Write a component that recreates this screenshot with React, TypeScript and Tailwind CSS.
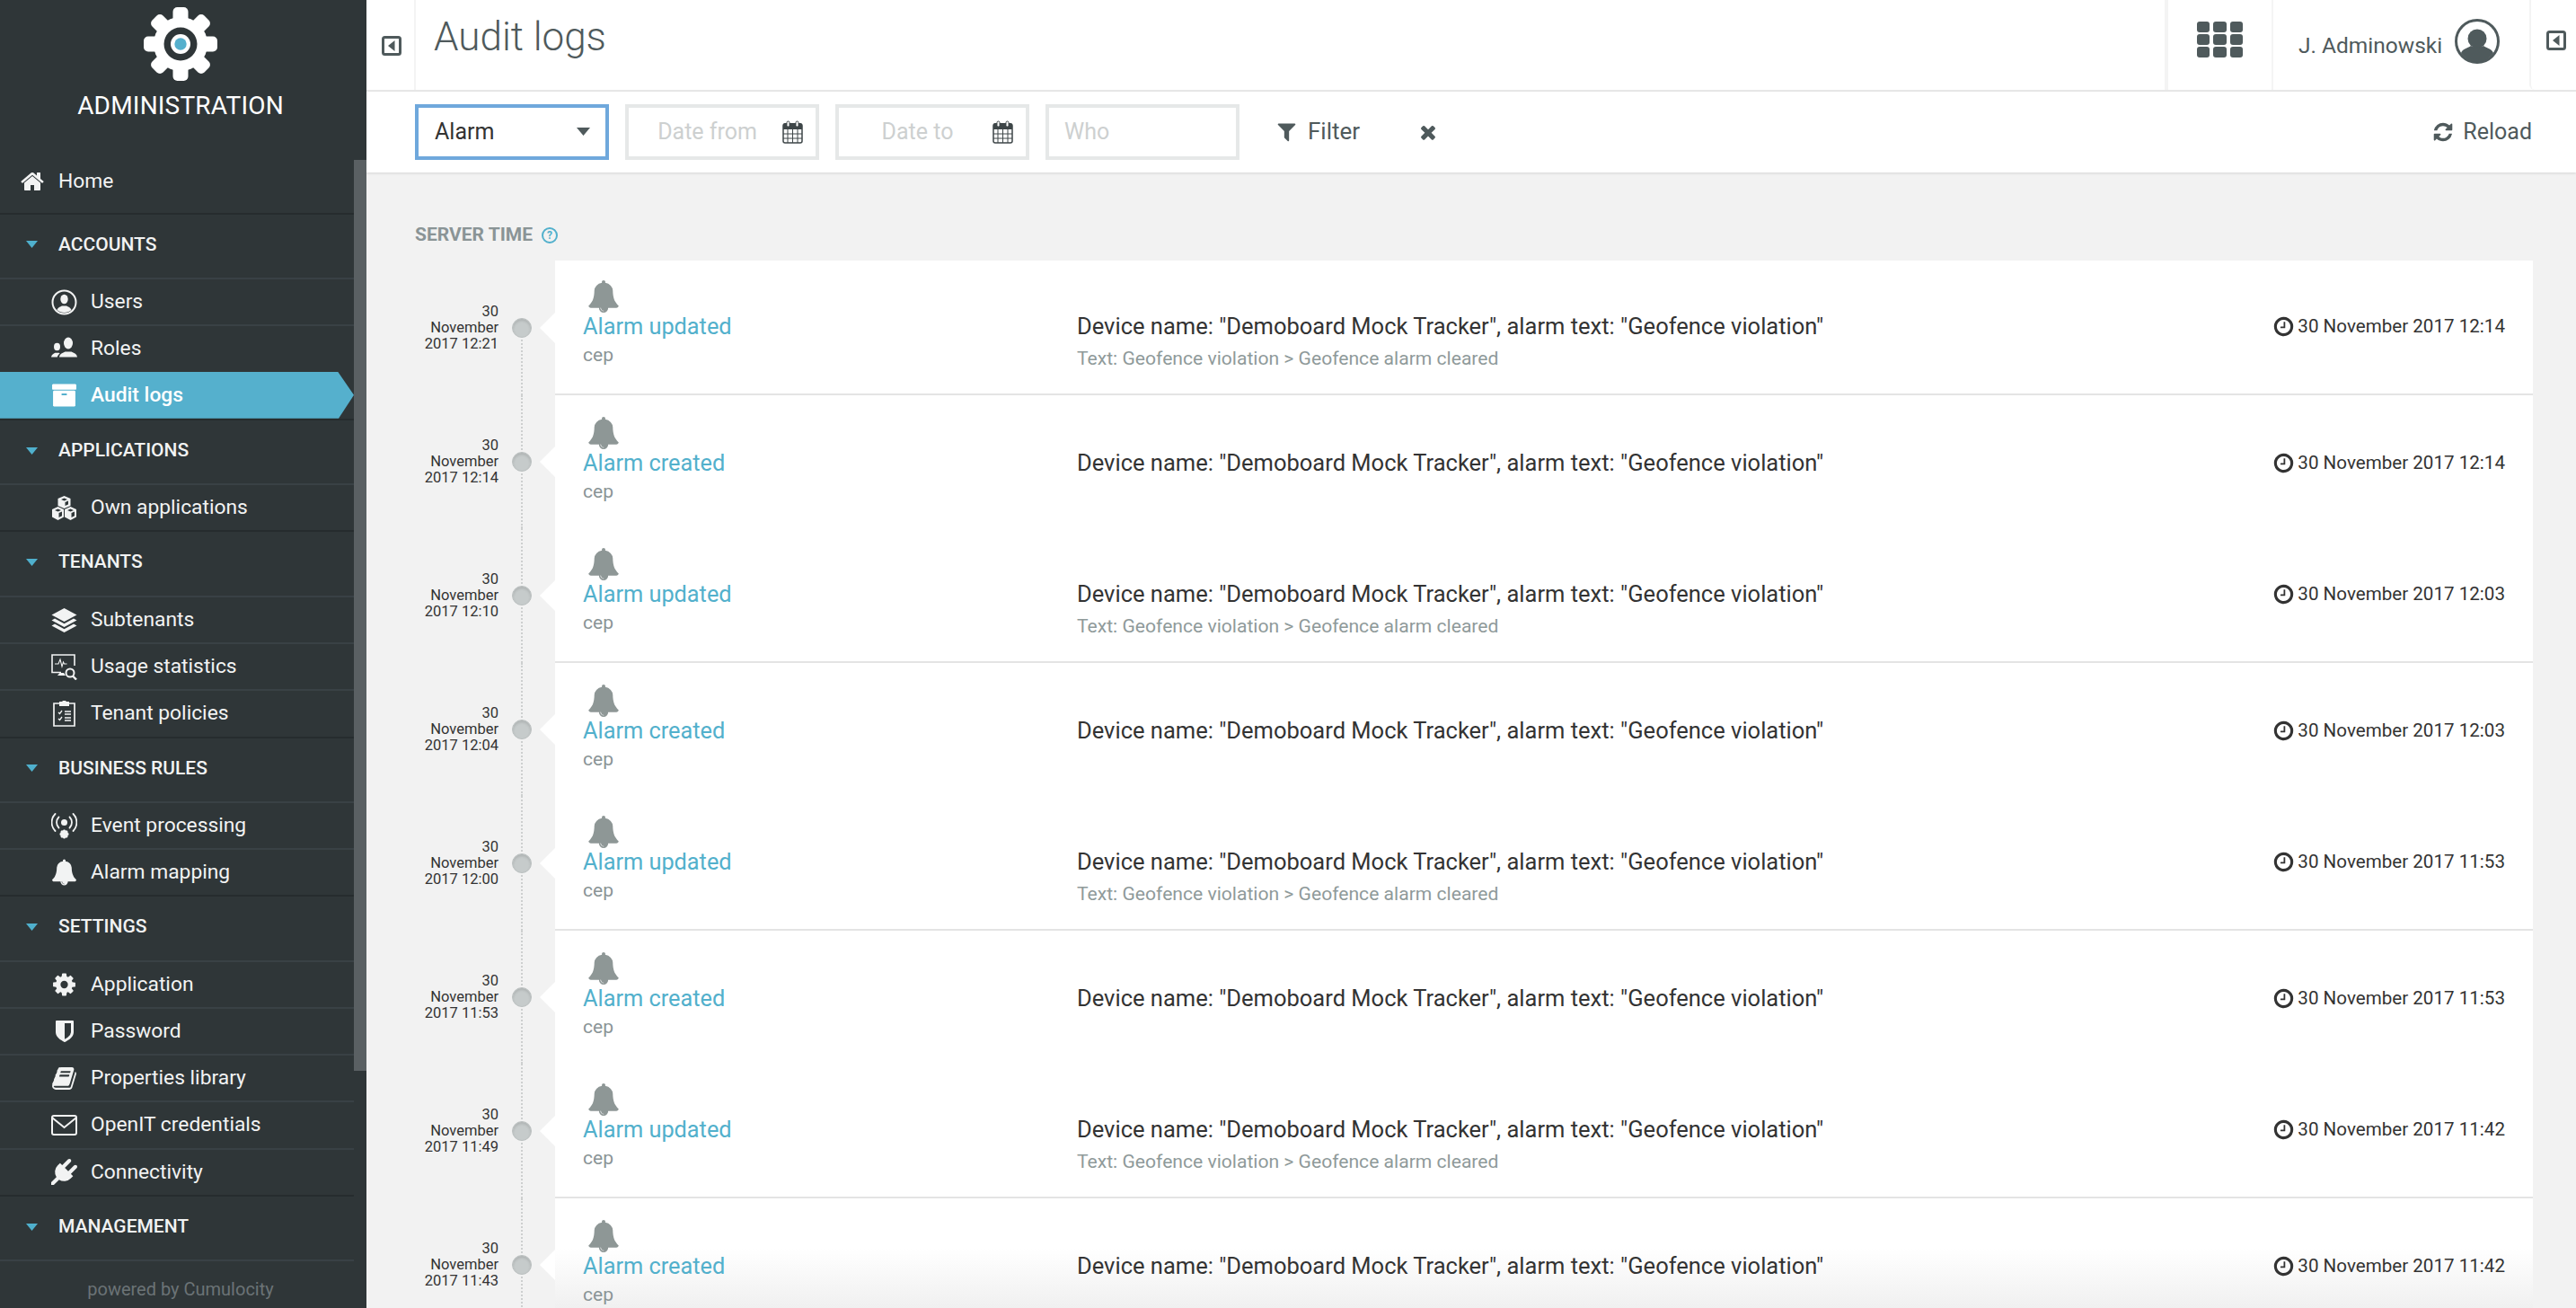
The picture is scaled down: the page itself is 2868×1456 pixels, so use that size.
import type { ReactNode } from "react";

const P = {
  home: "M1472 992v480q0 26-19 45t-45 19h-384v-384h-256v384h-384q-26 0-45-19t-19-45v-480q0-1 .5-3t.5-3l575-474 575 474q1 2 1 6zm223-69l-62 74q-8 9-21 11h-3q-13 0-21-7l-692-577-692 577q-12 8-24 7-13-2-21-11l-62-74q-8-10-7-23.500t11-21.500l719-599q32-26 76-26t76 26l244 204v-195q0-14 9-23t23-9h192q14 0 23 9t9 23v408l219 182q10 8 11 21.500t-7 23.500z",
  bell: "M912 1696q0-16-16-16-59 0-101.500-42.500t-42.500-101.500q0-16-16-16t-16 16q0 73 51.500 124.500t124.500 51.500q16 0 16-16zm816-288q0 52-38 90t-90 38h-448q0 106-75 181t-181 75-181-75-75-181h-448q-52 0-90-38t-38-90q50-42 91-88t85-119.500 74.500-158.500 50-206 19.500-260q0-152 117-282.500t307-158.500q-8-19-8-39 0-40 28-68t68-28 68 28 28 68q0 20-8 39 190 28 307 158.500t117 282.500q0 139 19.500 260t50 206 74.500 158.500 85 119.500 91 88z",
  cog: "M1152 896q0-106-75-181t-181-75-181 75-75 181 75 181 181 75 181-75 75-181zm512-109v222q0 12-8 23t-20 13l-185 28q-19 54-39 91 35 50 107 138 10 12 10 25t-9 23q-27 37-99 108t-94 71q-12 0-26-9l-138-108q-44 23-91 38-16 136-29 186-7 28-36 28h-222q-14 0-24.500-8.500t-11.500-21.500l-28-184q-49-16-90-37l-141 107q-10 9-25 9-14 0-25-11-126-114-165-168-7-10-7-23 0-12 8-23 15-21 51-66.500t54-70.500q-27-50-41-99l-183-27q-13-2-21-12.500t-8-23.500v-222q0-12 8-23t19-13l186-28q14-46 39-92-40-57-107-138-10-12-10-24 0-10 9-23 26-36 98.500-107.500t94.500-71.500q13 0 26 10l138 107q44-23 91-38 16-136 29-186 7-28 36-28h222q14 0 24.500 8.500t11.500 21.500l28 184q49 16 90 37l142-107q9-9 24-9 13 0 25 10 129 119 165 170 7 8 7 22 0 12-8 23-15 21-51 66.500t-54 70.500q26 50 41 98l183 28q13 2 21 12.500t8 23.500z",
  filter: "M1595 295q17 41-14 70l-493 493v742q0 42-39 59-13 5-25 5-27 0-45-19l-256-256q-19-19-19-45v-486l-493-493q-31-29-14-70 17-39 59-39h1280q42 0 59 39z",
  times: "M1490 1322q0 40-28 68l-136 136q-28 28-68 28t-68-28l-294-294-294 294q-28 28-68 28t-68-28l-136-136q-28-28-28-68t28-68l294-294-294-294q-28-28-28-68t28-68l136-136q28-28 68-28t68 28l294 294 294-294q28-28 68-28t68 28l136 136q28 28 28 68t-28 68l-294 294 294 294q28 28 28 68z",
  refresh: "M1639 1056q0 5-1 7-64 268-268 434.500t-478 166.500q-146 0-282.500-55t-243.500-157l-129 129q-19 19-45 19t-45-19-19-45v-448q0-26 19-45t45-19h448q26 0 45 19t19 45-19 45l-137 137q71 66 161 102t187 36q134 0 250-65t186-179q11-17 53-117 8-23 30-23h192q13 0 22.500 9.500t9.500 22.500zm25-800v448q0 26-19 45t-45 19h-448q-26 0-45-19t-19-45 19-45l138-138q-148-137-349-137-134 0-250 65t-186 179q-11 17-53 117-8 23-30 23h-199q-13 0-22.500-9.500t-9.500-22.500v-7q65-268 270-434.500t480-166.500q146 0 284 55.500t245 156.500l130-129q19-19 45-19t45 19 19 45z",
  archive: "M1088 832q0-26-19-45t-45-19h-256q-26 0-45 19t-19 45 19 45 45 19h256q26 0 45-19t19-45zm576-192v960q0 26-19 45t-45 19h-1408q-26 0-45-19t-19-45v-960q0-26 19-45t45-19h1408q26 0 45 19t19 45zm64-448v256q0 26-19 45t-45 19h-1536q-26 0-45-19t-19-45v-256q0-26 19-45t45-19h1536q26 0 45 19t19 45z",
  book: "M1703 478q40 57 18 129l-275 906q-19 64-76.500 107.500t-122.500 43.500h-923q-77 0-148.500-53.500t-99.500-131.500q-24-67-2-127 0-4 3-27t4-37q1-8-3-21.500t-3-19.500q2-11 8-21t16.500-23.500 16.500-23.500q23-38 45-91.500t30-91.500q3-10 .5-30t-.5-28q3-11 17-28t17-23q21-36 42-92t25-90q1-9-2.500-32t.5-28q4-13 22-30.500t22-22.500q19-26 42.500-84.500t27.500-96.500q1-8-3-25.500t-2-26.500q2-8 9-18t18-23 17-21q8-12 16.500-30.500t15-35 16-36 19.500-32 26.500-23.500 36-11.500 47.500 5.500l-1 3q38-9 51-9h761q74 0 114 56t18 130l-274 906q-36 119-71.500 153.500t-128.500 34.500h-869q-27 0-38 15-11 16-1 43 24 70 144 70h923q29 0 56-15.500t35-41.500l300-987q7-22 5-57 38 15 59 43zm-1064 2q-4 13 2 22.500t20 9.500h608q13 0 25.500-9.500t16.500-22.500l21-64q4-13-2-22.500t-20-9.500h-608q-13 0-25.500 9.500t-16.500 22.500zm-83 256q-4 13 2 22.500t20 9.500h608q13 0 25.500-9.500t16.500-22.500l21-64q4-13-2-22.500t-20-9.500h-608q-13 0-25.500 9.500t-16.500 22.500z",
  plug: "M1755 453q37 38 37 90.500t-37 90.500l-401 400 150 150-160 160q-163 163-389.500 186.500t-411.500-100.500l-362 362h-181v-181l362-362q-124-185-100.500-411.500t186.500-389.500l160-160 150 150 400-401q38-37 91-37t90 37 37 90.500-37 90.500l-400 401 234 234 401-400q38-37 91-37t90 37z",
  clock: "M1024 544v448q0 14-9 23t-23 9h-320q-14 0-23-9t-9-23v-64q0-14 9-23t23-9h224v-352q0-14 9-23t23-9h64q14 0 23 9t9 23zm416 352q0-148-73-273t-198-198-273-73-273 73-198 198-73 273 73 273 198 198 273 73 273-73 198-198 73-273zm224 0q0 209-103 385.500t-279.500 279.500-385.500 103-385.500-103-279.500-279.500-103-385.500 103-385.500 279.500-279.500 385.500-103 385.500 103 279.500 279.500 103 385.500z",
  shield: "M1344 960v-640h-448v1137q119-63 213-137 235-184 235-360zm192-768v768q0 86-33.500 170.500t-83 150-118 127.500-126.500 103-121 77.500-89.500 49.500-42.500 20q-12 6-26 6t-26-6q-16-7-42.500-20t-89.500-49.500-121-77.500-126.500-103-118-127.500-83-150-33.500-170.500v-768q0-26 19-45t45-19h1152q26 0 45 19t19 45z",
};

const Fa = ({ d, className }: { d: string; className: string }) => (
  <svg viewBox="0 0 1792 1792" className={className} fill="currentColor">
    <path d={d} />
  </svg>
);

const Svg = ({ children, className = "w-[29px] h-[29px]" }: { children: ReactNode; className?: string }) => (
  <svg viewBox="0 0 29 29" className={className} fill="currentColor">
    {children}
  </svg>
);

const UsersIcon = () => (
  <Svg>
    <circle cx="14.5" cy="14.5" r="13" fill="none" stroke="currentColor" strokeWidth="2" />
    <ellipse cx="14.5" cy="11" rx="4.2" ry="5.2" />
    <path d="M6.500 23c1-3 4-3.500 5.500-4.500h5c1.500 1 4.500 1.500 5.500 4.500-2 2-5 3-8 3s-6-1-8-3z" />
  </Svg>
);

const RolesIcon = () => (
  <Svg>
    <ellipse cx="19" cy="8" rx="5" ry="6.500" />
    <path d="M9 23.500c.5-4 4-4.500 6.500-6h7c2.500 1.500 6 2 6.500 6z" />
    <ellipse cx="6.500" cy="12" rx="3.500" ry="4.200" />
    <path d="M0 23.500c.3-2.800 2.700-3.500 4.300-4.700h4.400q.6.500 1 .8c-1.400.9-2.500 2.200-2.900 3.900z" />
  </Svg>
);

const CubesIcon = () => (
  <Svg>
    <path fillRule="evenodd" d="M14.500 1l7 3v8l-7 3-7-3V4zM11 5l3.500 1.500L18 5l-3.500-1.500zM15.500 8v4l3.500-1.500v-4z" />
    <path fillRule="evenodd" d="M7.500 13l6.500 3v8.500L7.500 28 1 24.500V16zM4 17l3.500 1.500L11 17l-3.500-1.500zM8.500 20v5l3.500-1.800v-4.700z" />
    <path fillRule="evenodd" d="M21.500 13l6.500 3v8.500L21.500 28 15 24.500V16zM18 17l3.500 1.500L25 17l-3.500-1.500zM22.500 20v5l3.500-1.800v-4.700z" />
  </Svg>
);

const LayersIcon = () => (
  <Svg>
    <path d="M14.500 1L28.500 8.500 14.500 16 .5 8.500z" />
    <path d="M4 12.500l10.500 5.700L25 12.500l3.500 2L14.500 22 .5 14.500z" />
    <path d="M4 18.500l10.500 5.700L25 18.500l3.500 2L14.500 28 .5 20.500z" />
  </Svg>
);

const UsageIcon = () => (
  <Svg>
    <path fill="none" stroke="currentColor" strokeWidth="1.600" d="M11 20.500H1V1h25v12" />
    <path d="M7 24h9l-2-3H9.500z" />
    <path fill="none" stroke="currentColor" strokeWidth="1.100" d="M4 11h4l2-5 2 8 1.500-5 1 2h3" />
    <circle cx="21" cy="21" r="4.500" fill="none" stroke="currentColor" strokeWidth="2" />
    <path stroke="currentColor" strokeWidth="2.400" d="M24 24.500l4 4" />
  </Svg>
);

const PolicyIcon = () => (
  <Svg>
    <path fill="none" stroke="currentColor" strokeWidth="1.700" d="M9 3H3v25h23V3h-6" />
    <path d="M9 1h3.500a2 2 0 0 1 4 0H20v5H9z" />
    <path fill="none" stroke="currentColor" strokeWidth="1.300" d="M8 13l1.500 1.500L12 11M8 20l1.500 1.500L12 18M15 12h7M15 15h7M15 19h7M15 22h7" />
  </Svg>
);

const EventIcon = () => (
  <Svg>
    <circle cx="14.500" cy="10.500" r="3.500" />
    <g fill="none" stroke="currentColor" strokeWidth="1.800" strokeLinecap="round">
      <path d="M8.500 4.500a8.500 8.500 0 0 0 0 12M20.500 4.500a8.500 8.500 0 0 1 0 12" />
      <path d="M4.500 1a13.500 13.500 0 0 0 0 19M24.500 1a13.500 13.500 0 0 1 0 19" />
    </g>
    <circle cx="14.500" cy="23.500" r="3" fill="none" stroke="currentColor" strokeWidth="3" />
    <path stroke="currentColor" strokeWidth="1.800" d="M14.500 18.500v10M9.500 23.500h10M11 20l7 7M18 20l-7 7" />
  </Svg>
);

const EnvelopeIcon = () => (
  <Svg>
    <rect x="1" y="4" width="27" height="21" rx="2" fill="none" stroke="currentColor" strokeWidth="2" />
    <path fill="none" stroke="currentColor" strokeWidth="2" d="M1.500 6.500L14.500 17l13-10.500" />
  </Svg>
);

const CalendarIcon = () => (
  <svg viewBox="0 0 23 26" className="w-[23px] h-[26px] text-[#3e4648]">
    <rect x="1" y="4" width="21" height="21" rx="2" fill="#fff" stroke="currentColor" strokeWidth="1.500" />
    <path fill="currentColor" d="M1 5a2 2 0 0 1 2-2h17a2 2 0 0 1 2 2v5H1z" />
    <rect x="5" y="1" width="3" height="6" rx="1.500" fill="#fff" stroke="currentColor" />
    <rect x="15" y="1" width="3" height="6" rx="1.500" fill="#fff" stroke="currentColor" />
    <path fill="none" stroke="currentColor" d="M1 15h21M1 20h21M6 10v15M11.500 10v15M17 10v15" />
  </svg>
);

const CaretSquare = () => (
  <svg viewBox="0 0 22 22" className="w-[22px] h-[22px] text-[#4f5a5c]">
    <rect x="1.500" y="1.500" width="19" height="19" rx="2" fill="none" stroke="currentColor" strokeWidth="3" />
    <path fill="currentColor" d="M14.500 5v12L7 11z" />
  </svg>
);

const Caret = () => (
  <svg viewBox="0 0 13 8" className="w-[13px] h-[8px] text-[#4fb0cd] mx-[29px] shrink-0" fill="currentColor">
    <path d="M0 0h13L6.500 8z" />
  </svg>
);

const LogoGear = () => (
  <svg viewBox="0 0 82 82" className="w-[82px] h-[82px]">
    <g fill="#fff">
      {[0, 45, 90, 135].map((a) => (
        <rect key={a} x="32.500" y="0" width="17" height="82" rx="5" transform={`rotate(${a} 41 41)`} />
      ))}
      <circle cx="41" cy="41" r="30" />
    </g>
    <circle cx="41" cy="41" r="18.500" fill="#2f3638" />
    <circle cx="41" cy="41" r="11" fill="#fff" />
    <circle cx="41" cy="41" r="6.700" fill="#55b0cd" />
  </svg>
);

const Section = ({ label }: { label: string }) => (
  <div className="flex items-center h-[72.5px] pb-[3px] border-t-2 border-t-[#262c2e] text-[21px] text-[#f2f3f3] font-medium">
    <Caret />
    <span className="-ml-[6px]">{label}</span>
  </div>
);

const Item = ({ icon, label, active }: { icon: ReactNode; label: string; active?: boolean }) => (
  <div
    className={
      active
        ? "flex items-center h-[52.2px] pl-[57px] bg-[#55b0cd] text-white font-medium text-[22.8px] [clip-path:polygon(0_0,376px_0,394px_50%,377px_100%,0_100%)]"
        : "flex items-center h-[52.2px] pl-[57px] border-t-2 border-t-[#394145] text-[#f2f3f3] text-[22.8px]"
    }
  >
    <span className="w-[29px] h-[29px] flex items-center justify-center shrink-0">{icon}</span>
    <span className="ml-[15px]">{label}</span>
  </div>
);

const rows = [
  { side: "12:21", action: "Alarm updated", time: "12:14" },
  { side: "12:14", action: "Alarm created", time: "12:14" },
  { side: "12:10", action: "Alarm updated", time: "12:03" },
  { side: "12:04", action: "Alarm created", time: "12:03" },
  { side: "12:00", action: "Alarm updated", time: "11:53" },
  { side: "11:53", action: "Alarm created", time: "11:53" },
  { side: "11:49", action: "Alarm updated", time: "11:42" },
  { side: "11:43", action: "Alarm created", time: "11:42" },
];

const Row = ({ side, action, time, index }: { side: string; action: string; time: string; index: number }) => {
  const updated = index % 2 === 0;
  const last = index === rows.length - 1;
  return (
    <div className={updated ? "flex h-[150px]" : "flex h-[148px]"}>
      <div className="relative flex items-center w-[156px] shrink-0">
        <div
          className={
            index === 0
              ? "absolute left-[118px] top-1/2 bottom-0 border-l-2 border-dotted border-[#cdcfcf]"
              : "absolute left-[118px] top-0 bottom-0 border-l-2 border-dotted border-[#cdcfcf]"
          }
        />
        <div className="w-[93px] text-right text-[16.5px] leading-[18px] text-[#333]">
          30
          <br />
          November
          <br />
          2017 {side}
        </div>
        <div className="relative ml-[15px] w-[22px] h-[22px] rounded-full bg-[#c6cbcb] border border-[#bcc1c1] shadow-[inset_0_2px_3px_rgba(0,0,0,0.12)]" />
        <div className="ml-[9px] w-0 h-0 border-y-[17px] border-y-transparent border-r-[17px] border-r-white" />
      </div>
      <div
        className={
          updated
            ? "flex-1 flex items-start bg-white pl-[31px] pr-[31px] pt-[22px] border-b-2 border-b-[#e4e4e4]"
            : last
              ? "flex-1 flex items-start bg-[linear-gradient(#fff_56px,#f0f0f0_122px)] pl-[31px] pr-[31px] pt-[24px]"
              : "flex-1 flex items-start bg-white pl-[31px] pr-[31px] pt-[24px]"
        }
      >
        <div className="w-[550px] shrink-0">
          <div className="h-[35px] pl-[5px]">
            <Fa d={P.bell} className="w-[36px] h-[36px] text-[#8e9796]" />
          </div>
          <div className="h-[32px] leading-[32px] mt-[1px] text-[25.3px] text-[#52b0cc]">{action}</div>
          <div className="mt-[3px] h-[24px] leading-[24px] text-[21px] text-[#8a9496]">cep</div>
        </div>
        <div className="flex-1 pt-[35px]">
          <div className="h-[32px] leading-[32px] text-[25.5px] text-[#333]">
            Device name: "Demoboard Mock Tracker", alarm text: "Geofence violation"
          </div>
          {updated && (
            <div className="mt-[8px] h-[24px] leading-[24px] text-[21.1px] text-[#8f9a9a]">
              Text: Geofence violation &gt; Geofence alarm cleared
            </div>
          )}
        </div>
        <div className="flex items-center h-[32px] mt-[35px] text-[#333] text-[20.6px]">
          <Fa d={P.clock} className="w-[25px] h-[25px] mr-[3px]" />
          30 November 2017 {time}
        </div>
      </div>
    </div>
  );
};

const Field = ({ label, center }: { label: string; center?: boolean }) => (
  <div className="flex items-center w-[216px] h-[62px] border-4 border-[#e6e8e8] text-[25px] text-[#cdd0d0]">
    {center ? (
      <>
        <span className="flex-1 text-center pl-[4px]">{label}</span>
        <span className="pr-[14px]">
          <CalendarIcon />
        </span>
      </>
    ) : (
      <span className="pl-[17px]">{label}</span>
    )}
  </div>
);

export default function App() {
  return (
    <div className="flex w-[2868px] h-[1456px] overflow-hidden bg-[#f2f2f2] font-['Roboto',sans-serif]">
      <aside className="relative flex flex-col w-[408px] shrink-0 bg-[#2f3638] text-white">
        <div className="flex flex-col items-center h-[166px] pt-[8px] pr-[6px]">
          <LogoGear />
          <div className="mt-[9px] text-[28px] leading-[38px] tracking-[0.2px]">ADMINISTRATION</div>
        </div>
        <nav className="w-[394px] flex-1 border-b-2 border-b-[#394145]">
          <div className="flex items-center h-[72px] pl-[22px] pt-[2px] text-[22.8px] text-[#f2f3f3]">
            <Fa d={P.home} className="w-[28px] h-[28px] mr-[15px]" />
            Home
          </div>
          <Section label="ACCOUNTS" />
          <Item icon={<UsersIcon />} label="Users" />
          <Item icon={<RolesIcon />} label="Roles" />
          <Item icon={<Fa d={P.archive} className="w-[30px] h-[30px]" />} label="Audit logs" active />
          <Section label="APPLICATIONS" />
          <Item icon={<CubesIcon />} label="Own applications" />
          <Section label="TENANTS" />
          <Item icon={<LayersIcon />} label="Subtenants" />
          <Item icon={<UsageIcon />} label="Usage statistics" />
          <Item icon={<PolicyIcon />} label="Tenant policies" />
          <Section label="BUSINESS RULES" />
          <Item icon={<EventIcon />} label="Event processing" />
          <Item icon={<Fa d={P.bell} className="w-[30px] h-[30px]" />} label="Alarm mapping" />
          <Section label="SETTINGS" />
          <Item icon={<Fa d={P.cog} className="w-[30px] h-[30px]" />} label="Application" />
          <Item icon={<Fa d={P.shield} className="w-[28px] h-[28px]" />} label="Password" />
          <Item icon={<Fa d={P.book} className="w-[29px] h-[29px]" />} label="Properties library" />
          <Item icon={<EnvelopeIcon />} label="OpenIT credentials" />
          <Item icon={<Fa d={P.plug} className="w-[29px] h-[29px]" />} label="Connectivity" />
          <Section label="MANAGEMENT" />
        </nav>
        <div className="flex items-center justify-center h-[52px] pt-[10px] pr-[6px] text-[20px] text-[#6b7376]">
          powered by Cumulocity
        </div>
        <div className="absolute right-0 top-[178px] w-[14px] h-[1014px] bg-[#5a6063]" />
      </aside>

      <main className="relative flex-1 flex flex-col min-w-0 overflow-hidden">
        <header className="flex h-[102px] shrink-0 bg-white border-b-2 border-b-[#e9e9e9] text-[#4f5a5c]">
          <div className="w-[55px] border-r-2 border-r-[#f4f4f4] flex pl-[17px] pt-[40px]">
            <CaretSquare />
          </div>
          <h1 className="flex-1 pl-[20px] pt-[15px] text-[44px] leading-[52px] font-light">Audit logs</h1>
          <div className="flex items-start justify-center w-[121px] shrink-0 border-l-[4px] border-x-[#f4f4f4] border-r-2 pt-[24px]">
            <div className="grid grid-cols-3 gap-x-[4px] gap-y-[2px] w-[51px]">
              {Array.from({ length: 9 }).map((_, i) => (
                <div key={i} className="h-[12px] rounded-[3px] bg-[#4f5a5c]" />
              ))}
            </div>
          </div>
          <div className="flex items-start w-[285px] shrink-0 pl-[28px] pt-[21px] text-[24.5px]">
            <span className="mt-[15px] leading-[30px]">J. Adminowski</span>
            <svg viewBox="0 0 50 50" className="w-[50px] h-[50px] ml-[14px]">
              <circle cx="25" cy="25" r="23.500" fill="none" stroke="currentColor" strokeWidth="3" />
              <circle cx="25" cy="22" r="10.500" fill="currentColor" />
              <path fill="currentColor" d="M7 38c2-5 7-5 11-8 4 2 10 2 14 0 4 3 9 3 11 8-4 6-11 10-18 10S11 44 7 38z" />
            </svg>
          </div>
          <div className="w-[52px] shrink-0 border-l-2 border-l-[#f4f4f4] rounded-bl-[6px] pl-[17px] pt-[34px]">
            <CaretSquare />
          </div>
        </header>

        <div className="flex items-center h-[90px] shrink-0 bg-white pl-[54px] pr-[49px] pb-[1px] shadow-[0_1px_3px_rgba(0,0,0,0.12)] gap-[18px] z-10">
          <div className="flex items-center justify-between w-[216px] h-[62px] border-4 border-[#6fa8dc] pl-[18px] pr-[17px] text-[25px] text-[#333]">
            Alarm
            <svg viewBox="0 0 15 9" className="w-[15px] h-[9px] text-[#4f5a5c]" fill="currentColor">
              <path d="M0 0h15L7.500 9z" />
            </svg>
          </div>
          <Field label="Date from" center />
          <Field label="Date to" center />
          <Field label="Who" />
          <div className="flex items-center ml-[22px] text-[26px] text-[#4f5a5c]">
            <Fa d={P.filter} className="w-[25px] h-[25px] mr-[11px]" />
            Filter
          </div>
          <Fa d={P.times} className="ml-[46px] w-[24px] h-[24px] text-[#4f5a5c]" />
          <div className="flex items-center ml-auto text-[25px] text-[#4f5a5c]">
            <Fa d={P.refresh} className="w-[24px] h-[24px] mr-[10px]" />
            Reload
          </div>
        </div>

        <div className="flex-1 pl-[54px] pr-[48px] pt-[58px] overflow-hidden">
          <div className="flex items-center h-[24px] mb-[16px] text-[21px] font-bold text-[#8a9496]">
            SERVER TIME
            <span className="ml-[10px] flex items-center justify-center w-[18px] h-[18px] rounded-full border-2 border-[#52b0cc] text-[12px] text-[#52b0cc]">
              ?
            </span>
          </div>
          {rows.map((r, i) => (
            <Row key={i} index={i} side={r.side} action={r.action} time={r.time} />
          ))}
        </div>
      </main>
    </div>
  );
}
